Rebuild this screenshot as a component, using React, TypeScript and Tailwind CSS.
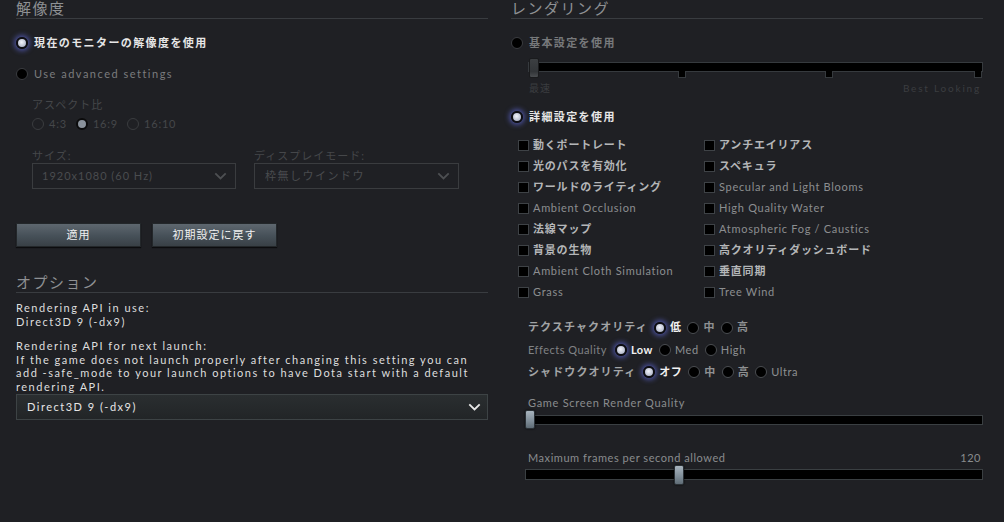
import React from "react";

function Header({ children }: { children: React.ReactNode }) {
  return (
    <div className="h-[19px] border-b border-[#393c40] text-[15px] leading-[16px] text-[#8e9093] tracking-[1.5px]">
      {children}
    </div>
  );
}

function Radio({ on, dim, ring = "#3a3c40" }: { on?: boolean; dim?: boolean; ring?: string }) {
  if (on && dim)
    return <span className="block w-[12px] h-[12px] rounded-full border-[2px] border-[#0b0b0c] bg-[#8a929c] shrink-0" />;
  if (on)
    return (
      <span className="block w-[12px] h-[12px] rounded-full border-[2px] border-[#0d0d12] bg-[radial-gradient(circle_at_45%_40%,#f2f4fb_0%,#b6bccd_70%,#8e95aa_100%)] shadow-[0_0_5px_2px_rgba(95,105,215,0.65)] shrink-0" />
    );
  if (dim)
    return <span className="block w-[12px] h-[12px] rounded-full border-[1.5px] border-[#3a3c3f] shrink-0" />;
  return (
    <span
      className="block w-[12px] h-[12px] rounded-full bg-black border-[1.5px] shrink-0"
      style={{ borderColor: ring }}
    />
  );
}

function Check({ label, en }: { label: string; en?: boolean }) {
  return (
    <div className="flex items-center gap-[4px]">
      <span className="block w-[11px] h-[11px] bg-black border border-[#3e4246] shrink-0" />
      <span
        className={
          en
            ? "text-[11px] tracking-[0.7px] text-[#8c8e90] whitespace-nowrap"
            : "text-[11px] tracking-[0.8px] font-semibold text-[#b4b6b8] whitespace-nowrap"
        }
      >
        {label}
      </span>
    </div>
  );
}

function Chevron({ color, w }: { color: string; w: number }) {
  return (
    <svg width={w} height={w * 0.6} viewBox="0 0 10 6" fill="none">
      <polyline points="1,1 5,5 9,1" stroke={color} strokeWidth="1.4" />
    </svg>
  );
}

function Opt({ on, label, en }: { on?: boolean; label: string; en?: boolean }) {
  return (
    <div className="flex items-center gap-[4px]">
      <Radio on={on} ring="#4a4d51" />
      <span
        className={
          on
            ? "text-[11px] font-bold text-[#f2f2f2] tracking-[0.5px]"
            : en
            ? "text-[11px] text-[#8e9092] tracking-[0.6px]"
            : "text-[11px] text-[#8e9092] font-semibold tracking-[0.5px]"
        }
      >
        {label}
      </span>
    </div>
  );
}

function Thumb({ className }: { className: string }) {
  return (
    <div
      className={
        "absolute w-[10px] h-[19px] rounded-[2px] bg-[linear-gradient(#a8b4be,#7d8b96_60%,#5f6c76)] border border-[#2a3035] shadow-[0_0_2px_rgba(0,0,0,0.8)] " +
        className
      }
    />
  );
}

export default function App() {
  return (
    <div className="w-[1004px] h-[522px] bg-[#1f2024] flex gap-[23px] pl-[16px] overflow-hidden font-[Lato,'Noto_Sans_CJK_JP',sans-serif]">
      {/* LEFT */}
      <div className="w-[472px] flex flex-col">
        <Header>解像度</Header>
        <div className="mt-[17px] h-[14px] flex items-center gap-[6px]">
          <Radio on />
          <span className="text-[11px] font-semibold tracking-[1.4px] text-[#e6e6e6]">現在のモニターの解像度を使用</span>
        </div>
        <div className="mt-[17px] h-[14px] flex items-center gap-[6px]">
          <Radio />
          <span className="text-[11px] tracking-[1.5px] text-[#7b7c7e]">Use advanced settings</span>
        </div>
        <div className="pl-[16px] flex flex-col">
          <div className="mt-[17px] h-[14px] text-[11px] leading-[14px] tracking-[1px] text-[#45474a]">アスペクト比</div>
          <div className="mt-[5px] h-[14px] flex items-center gap-[9px] text-[11px] tracking-[0.8px] text-[#45474a]">
            <div className="flex items-center gap-[5px]"><Radio dim /><span>4:3</span></div>
            <div className="flex items-center gap-[5px]"><Radio on dim /><span>16:9</span></div>
            <div className="flex items-center gap-[5px]"><Radio dim /><span>16:10</span></div>
          </div>
          <div className="mt-[18px] flex gap-[18px]">
            <div className="flex flex-col w-[204px]">
              <div className="h-[14px] text-[11px] leading-[14px] tracking-[1px] text-[#45474a]">サイズ:</div>
              <div className="h-[26px] border border-[#3a3c3f] flex items-center justify-between pl-[9px] pr-[8px] text-[11px] tracking-[1px] text-[#4a4c4f]">
                <span>1920x1080 (60 Hz)</span>
                <Chevron color="#4d4f52" w={13} />
              </div>
            </div>
            <div className="flex flex-col w-[205px]">
              <div className="h-[14px] text-[11px] leading-[14px] tracking-[1px] text-[#45474a]">ディスプレイモード:</div>
              <div className="h-[26px] border border-[#3a3c3f] flex items-center justify-between pl-[10px] pr-[8px] text-[11px] tracking-[1.5px] text-[#4a4c4f]">
                <span>枠無しウインドウ</span>
                <Chevron color="#4d4f52" w={13} />
              </div>
            </div>
          </div>
        </div>
        <div className="mt-[34px] flex gap-[11px]">
          <div className="w-[125px] h-[24px] flex items-center justify-center text-[11px] tracking-[1px] text-[#f0f0f0] bg-[linear-gradient(#5e676f,#465058_55%,#394046)] border border-[#23272a] shadow-[0_1px_1px_rgba(0,0,0,0.6)]">
            適用
          </div>
          <div className="w-[125px] h-[24px] flex items-center justify-center text-[11px] tracking-[1px] text-[#f0f0f0] bg-[linear-gradient(#5e676f,#465058_55%,#394046)] border border-[#23272a] shadow-[0_1px_1px_rgba(0,0,0,0.6)]">
            初期設定に戻す
          </div>
        </div>
        <div className="mt-[27px]">
          <Header>オプション</Header>
        </div>
        <div className="mt-[8px] text-[11px] leading-[13.5px] tracking-[1.5px] text-[#dedede] whitespace-nowrap">
          <div>Rendering API in use:</div>
          <div>Direct3D 9 (-dx9)</div>
        </div>
        <div className="mt-[11px] text-[11px] leading-[13.5px] tracking-[1.5px] text-[#dedede] whitespace-nowrap">
          <div>Rendering API for next launch:</div>
          <div>If the game does not launch properly after changing this setting you can</div>
          <div>add -safe_mode to your launch options to have Dota start with a default</div>
          <div>rendering API.</div>
        </div>
        <div className="mt-[1px] h-[26px] border border-[#3d4345] bg-[linear-gradient(#2a2e30,#222527)] flex items-center justify-between pl-[10px] pr-[6px] text-[11px] tracking-[1.5px] text-[#e6e6e6]">
          <span>Direct3D 9 (-dx9)</span>
          <Chevron color="#e8e8e8" w={13} />
        </div>
      </div>

      {/* RIGHT */}
      <div className="w-[472px] flex flex-col">
        <Header>レンダリング</Header>
        <div className="mt-[17px] h-[14px] flex items-center gap-[6px]">
          <Radio />
          <span className="text-[11px] font-semibold tracking-[1.4px] text-[#77797b]">基本設定を使用</span>
        </div>
        <div className="mt-[8px] relative h-[21px]">
          <div className="absolute left-[17px] right-0 top-[4px] h-[10px] bg-black border border-[#363a3e]" />
          <div className="absolute left-[167px] top-[13px] w-[8px] h-[7px] bg-black border-x border-b border-[#363a3e]" />
          <div className="absolute left-[314px] top-[13px] w-[8px] h-[7px] bg-black border-x border-b border-[#363a3e]" />
          <div className="absolute left-[463px] top-[13px] w-[8px] h-[7px] bg-black border-x border-b border-[#363a3e]" />
          <div className="absolute left-[18px] top-0 w-[10px] h-[20px] rounded-[2px] bg-[linear-gradient(#3c3f42,#323538_70%,#4a4d50)] border border-[#1a1b1d]" />
        </div>
        <div className="mt-[2px] h-[14px] flex items-center justify-between pl-[18px] pr-[2px] text-[10px] text-[#3b3d40]">
          <span className="tracking-[1px]">最速</span>
          <span className="tracking-[1.8px]">Best Looking</span>
        </div>
        <div className="mt-[15px] h-[14px] flex items-center gap-[6px]">
          <Radio on />
          <span className="text-[11px] font-semibold tracking-[1.4px] text-[#e6e6e6]">詳細設定を使用</span>
        </div>
        <div className="mt-[11px] pl-[7px] grid grid-cols-[186px_1fr] auto-rows-[21px] items-center">
          <Check label="動くポートレート" />
          <Check label="アンチエイリアス" />
          <Check label="光のパスを有効化" />
          <Check label="スペキュラ" />
          <Check label="ワールドのライティング" />
          <Check label="Specular and Light Blooms" en />
          <Check label="Ambient Occlusion" en />
          <Check label="High Quality Water" en />
          <Check label="法線マップ" />
          <Check label="Atmospheric Fog / Caustics" en />
          <Check label="背景の生物" />
          <Check label="高クオリティダッシュボード" />
          <Check label="Ambient Cloth Simulation" en />
          <Check label="垂直同期" />
          <Check label="Grass" en />
          <Check label="Tree Wind" en />
        </div>
        <div className="mt-[13px] pl-[17px] flex flex-col">
          <div className="h-[23px] flex items-center gap-[6px]">
            <span className="text-[11px] font-semibold tracking-[1.1px] text-[#a2a4a6]">テクスチャクオリティ</span>
            <Opt on label="低" />
            <Opt label="中" />
            <Opt label="高" />
          </div>
          <div className="h-[22px] flex items-center gap-[6px]">
            <span className="text-[11px] tracking-[0.5px] text-[#808284] mr-[2px]">Effects Quality</span>
            <Opt on label="Low" en />
            <Opt label="Med" en />
            <Opt label="High" en />
          </div>
          <div className="h-[22px] flex items-center gap-[6px]">
            <span className="text-[11px] font-semibold tracking-[1.1px] text-[#a2a4a6] mr-[1px]">シャドウクオリティ</span>
            <Opt on label="オフ" />
            <Opt label="中" />
            <Opt label="高" />
            <Opt label="Ultra" en />
          </div>
        </div>
        <div className="mt-[14px] pl-[17px] h-[13px] flex items-center text-[11px] tracking-[0.7px] text-[#8a8c8e]">
          Game Screen Render Quality
        </div>
        <div className="relative h-[19px]">
          <div className="absolute left-[14px] right-0 top-[5px] h-[10px] bg-black border border-[#3a3f42]" />
          <Thumb className="left-[14px] top-0" />
        </div>
        <div className="mt-[22px] pl-[17px] pr-[2px] h-[14px] flex items-center justify-between text-[11px] tracking-[0.55px] text-[#8a8c8e]">
          <span>Maximum frames per second allowed</span>
          <span>120</span>
        </div>
        <div className="relative h-[20px]">
          <div className="absolute left-[14px] right-0 top-[4px] h-[11px] bg-black border border-[#3a3f42]" />
          <Thumb className="left-[163px] top-0 h-[20px]" />
        </div>
      </div>
    </div>
  );
}
